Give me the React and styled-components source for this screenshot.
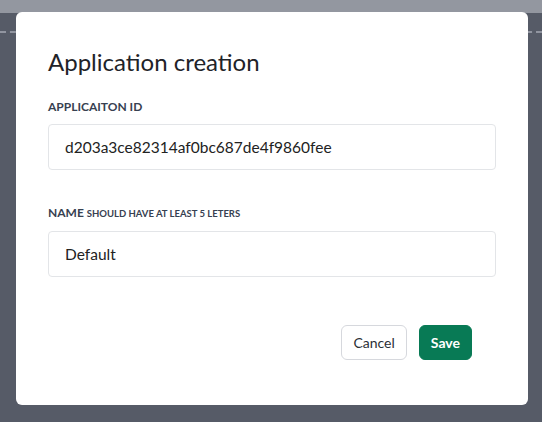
import React from 'react';
import styled, { createGlobalStyle } from 'styled-components';

const GlobalStyle = createGlobalStyle`
    html, body {
        margin: 0;
        padding: 0;
        height: 100%;
    }
    body {
        font-family: Lato, "Noto Sans", sans-serif;
        background: #565b67;
        overflow: hidden;
    }
`;

const Page = styled.div`
    height: 422px;
    display: flex;
    flex-direction: column;
`;

const TopBar = styled.header`
    height: 13px;
    background: #9397a0;
`;

const Content = styled.main`
    flex: 1;
    padding-top: 18px;
`;

const Divider = styled.div`
    height: 0;
    border-top: 2px dashed #9195a0;
`;

const Overlay = styled.div`
    position: fixed;
    inset: 0;
    display: flex;
    padding: 12px 0 0 16px;
`;

const Modal = styled.section`
    width: 512px;
    height: 393px;
    box-sizing: border-box;
    background: #fff;
    border-radius: 6px;
    padding: 32px 32px 0;
    display: flex;
    flex-direction: column;
`;

const Title = styled.h2`
    margin: 0;
    font-size: 24px;
    font-weight: 400;
    color: #1f2328;
    line-height: 36px;
`;

const Field = styled.div`
    display: flex;
    flex-direction: column;
    margin-top: ${p => p.$top}px;
`;

const Label = styled.label`
    font-size: 12px;
    font-weight: 700;
    color: #374151;
    text-transform: uppercase;
    line-height: 16px;
    margin-bottom: 9px;
`;

const Hint = styled.span`
    font-size: 9.5px;
    font-weight: 700;
`;

const Input = styled.input`
    height: 46px;
    box-sizing: border-box;
    border: 1px solid #e3e5e8;
    border-radius: 4px;
    padding: 0 16px;
    font-family: inherit;
    font-size: 15.5px;
    color: #222;
    outline: none;
`;

const Actions = styled.div`
    display: flex;
    justify-content: flex-end;
    gap: 12px;
    margin-top: 48px;
    padding-right: 24px;
`;

const Button = styled.button`
    height: 35px;
    box-sizing: border-box;
    border-radius: 6px;
    font-family: inherit;
    font-size: 14px;
    padding: 0 11px;
    cursor: pointer;
    border: 1px solid ${p => (p.$primary ? '#087a55' : '#d6d8dd')};
    background: ${p => (p.$primary ? '#087a55' : '#fff')};
    color: ${p => (p.$primary ? '#fff' : '#2b2f36')};
    font-weight: ${p => (p.$primary ? 700 : 400)};
`;

export default function App() {
    return (
        <>
            <GlobalStyle />
            <Page>
                <TopBar />
                <Content>
                    <Divider />
                </Content>
            </Page>
            <Overlay>
                <Modal>
                    <Title>Application creation</Title>
                    <Field $top={19}>
                        <Label>Applicaiton ID</Label>
                        <Input readOnly value="d203a3ce82314af0bc687de4f9860fee" />
                    </Field>
                    <Field $top={35}>
                        <Label>Name <Hint>should have at least 5 leters</Hint></Label>
                        <Input defaultValue="Default" />
                    </Field>
                    <Actions>
                        <Button>Cancel</Button>
                        <Button $primary>Save</Button>
                    </Actions>
                </Modal>
            </Overlay>
        </>
    );
}
